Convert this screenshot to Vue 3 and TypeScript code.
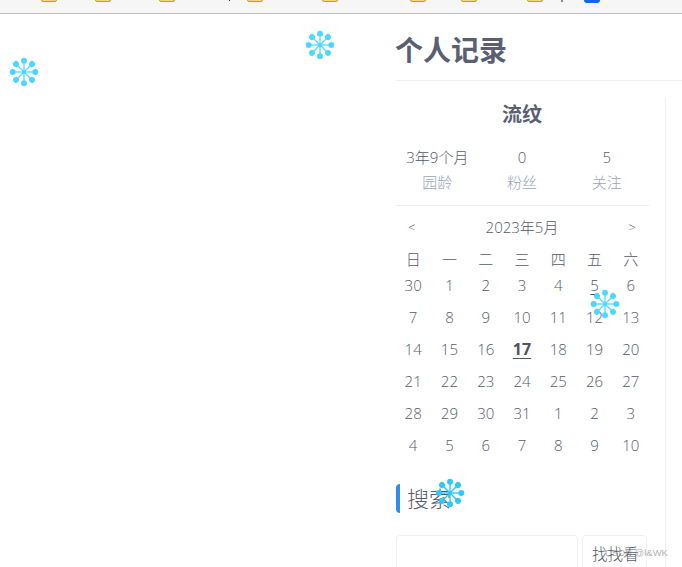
<script setup lang="ts">
const toolbar = [
  { x: 41, w: 16, k: 'folder' }, { x: 95, w: 16, k: 'folder' }, { x: 159, w: 16, k: 'folder' },
  { x: 229, w: 1, k: 'tick' }, { x: 247, w: 16, k: 'folder' }, { x: 322, w: 16, k: 'folder' },
  { x: 410, w: 16, k: 'folder' }, { x: 461, w: 16, k: 'folder' }, { x: 527, w: 16, k: 'folder' },
  { x: 561, w: 2, k: 'tick gray' }, { x: 584, w: 16, k: 'blue' },
]
const items = toolbar.map((t, i) => ({
  ...t,
  gap: i === 0 ? t.x : t.x - toolbar[i - 1].x - toolbar[i - 1].w,
}))
const stats = [
  { v: '3年9个月', l: '园龄' },
  { v: '0', l: '粉丝' },
  { v: '5', l: '关注' },
]
const week = ['日', '一', '二', '三', '四', '五', '六']
const days = [
  30, 1, 2, 3, 4, 5, 6, 7, 8, 9, 10, 11, 12, 13, 14, 15, 16, 17, 18, 19, 20,
  21, 22, 23, 24, 25, 26, 27, 28, 29, 30, 31, 1, 2, 3, 4, 5, 6, 7, 8, 9, 10,
]
const spokes = [0, 45, 90, 135, 180, 225, 270, 315]
const flakes = [
  { cls: 'f1' }, { cls: 'f2' }, { cls: 'f3' }, { cls: 'f4' },
]
</script>

<template>
  <div class="page">
    <div class="toolbar">
      <span
        v-for="(t, i) in items"
        :key="i"
        :class="t.k"
        :style="{ marginLeft: t.gap + 'px' }"
      ></span>
    </div>
    <div class="main">
      <div class="content"></div>
      <aside class="right">
        <h1 class="title">个人记录</h1>
        <div class="panel">
          <div class="card">
            <div class="name">流纹</div>
            <div class="stats">
              <div v-for="s in stats" :key="s.l" class="stat">
                <div class="val">{{ s.v }}</div>
                <div class="lab">{{ s.l }}</div>
              </div>
            </div>
            <hr class="rule" />
            <div class="cal-head">
              <span class="nav">&lt;</span>
              <span>2023年5月</span>
              <span class="nav">&gt;</span>
            </div>
            <div class="week">
              <span v-for="w in week" :key="w">{{ w }}</span>
            </div>
            <div class="days">
              <span v-for="(d, i) in days" :key="i" class="day">
                <u v-if="i === 17" class="today">{{ d }}</u>
                <u v-else-if="i === 5" class="mark">{{ d }}</u>
                <template v-else>{{ d }}</template>
              </span>
            </div>
            <h2 class="search-title">搜索</h2>
            <div class="search">
              <div class="input"></div>
              <div class="btn">找找看</div>
            </div>
          </div>
        </div>
      </aside>
    </div>
    <svg
      v-for="f in flakes"
      :key="f.cls"
      :class="['flake', f.cls]"
      viewBox="-15 -15 30 30"
      width="30"
      height="30"
    >
      <g v-for="a in spokes" :key="a" :transform="`rotate(${a})`">
        <line x1="0" y1="0" x2="0" y2="-11" />
        <circle cx="0" cy="-11.3" r="3" />
      </g>
      <circle cx="0" cy="0" r="2" />
    </svg>
    <span class="watermark">CSDN @l&amp;WK</span>
  </div>
</template>

<style>
html,
body {
  margin: 0;
  overflow: hidden;
  background: #fff;
}
</style>

<style scoped>
.page {
  position: relative;
  width: 682px;
  height: 567px;
  overflow: hidden;
  font-family: "Open Sans", "Noto Sans CJK SC", sans-serif;
  font-weight: 300;
  color: #565b6b;
}
.toolbar {
  display: flex;
  align-items: flex-start;
  height: 13px;
  background: #f6f6f6;
  border-bottom: 1px solid #bfbfbf;
  overflow: hidden;
}
.folder {
  flex: none;
  width: 14px;
  height: 6px;
  margin-top: -6px;
  border: 1px solid #cf9c21;
  border-radius: 2px;
  background: #f0d589;
}
.blue {
  flex: none;
  width: 16px;
  height: 7px;
  margin-top: -4px;
  border-radius: 3px;
  background: #0a66f5;
}
.tick {
  flex: none;
  width: 1px;
  height: 1px;
  background: #333;
}
.tick.gray {
  width: 2px;
  height: 2px;
  background: #8a8a8a;
}
.main {
  display: flex;
}
.content {
  flex: none;
  width: 396px;
}
.right {
  flex: 1;
  min-width: 0;
}
.title {
  margin: 0;
  height: 67px;
  box-sizing: border-box;
  border-bottom: 1px solid #eef0f6;
  padding-top: 17px;
  font-size: 28px;
  line-height: 38px;
  font-weight: 700;
  color: #5a6072;
  text-indent: -1px;
}
.panel {
  margin-top: 16px;
  width: 270px;
  height: 480px;
  box-sizing: border-box;
  border-right: 1px solid #eeeff3;
}
.card {
  width: 253px;
}
.name {
  margin-left: -1px;
  text-align: center;
  height: 36px;
  font-size: 20px;
  line-height: 36px;
  font-weight: 700;
  color: #5a6072;
}
.stats {
  display: grid;
  grid-template-columns: repeat(3, 1fr);
  margin-left: -1px;
  padding: 12px 0 11px;
  text-align: center;
  font-size: 15px;
}
.val {
  line-height: 25px;
}
.lab {
  line-height: 24px;
  color: #9aa6b8;
}
.rule {
  margin: 0;
  border: 0;
  border-top: 1px solid #ececec;
}
.cal-head {
  display: flex;
  justify-content: space-between;
  align-items: center;
  height: 41px;
  margin-bottom: 2px;
  padding: 0 13px 0 12px;
  font-size: 15px;
}
.nav {
  font-size: 13px;
}
.week,
.days {
  display: grid;
  grid-template-columns: repeat(7, 1fr);
  margin-left: -1px;
  text-align: center;
  font-size: 15px;
}
.week {
  height: 21px;
  line-height: 20px;
}
.days {
  grid-auto-rows: 32px;
}
.day {
  line-height: 30px;
}
.today {
  font-weight: 700;
  font-size: 16px;
  color: #4e5361;
  text-underline-offset: 3px;
}
.mark {
  color: #4e5361;
  text-underline-offset: 3px;
  text-decoration-thickness: 1px;
}
.search-title {
  margin: 22px 0 0 0;
  height: 29px;
  border-left: 4px solid #2f8df0;
  border-radius: 4px 0 0 4px;
  padding-left: 7px;
  font-size: 22px;
  line-height: 29px;
  font-weight: 300;
}
.search {
  display: flex;
  gap: 4px;
  margin-top: 22px;
}
.input {
  width: 180px;
  height: 50px;
  border: 1px solid #eef0f6;
  border-radius: 4px;
}
.btn {
  flex: none;
  width: 65px;
  height: 50px;
  box-sizing: border-box;
  border: 1px solid #eef0f6;
  border-radius: 4px;
  padding-left: 9px;
  font-size: 15.5px;
  line-height: 36px;
  white-space: nowrap;
}
.flake {
  position: absolute;
  fill: #4fd8ff;
}
.flake line {
  stroke: #5fdcff;
  stroke-width: 1.4;
}
.f1 { left: 305px; top: 30px; }
.f2 { left: 9px; top: 57px; }
.f3 { left: 590px; top: 289px; }
.f4 { left: 435px; top: 478px; fill: #2bcbf5; }
.f4 line { stroke: #2bcbf5; }
.watermark {
  position: absolute;
  left: 605px;
  top: 547px;
  font-family: "Liberation Sans", sans-serif;
  font-size: 9.5px;
  line-height: 12px;
  font-weight: 400;
  color: rgba(120, 120, 120, 0.6);
  white-space: nowrap;
}
</style>
